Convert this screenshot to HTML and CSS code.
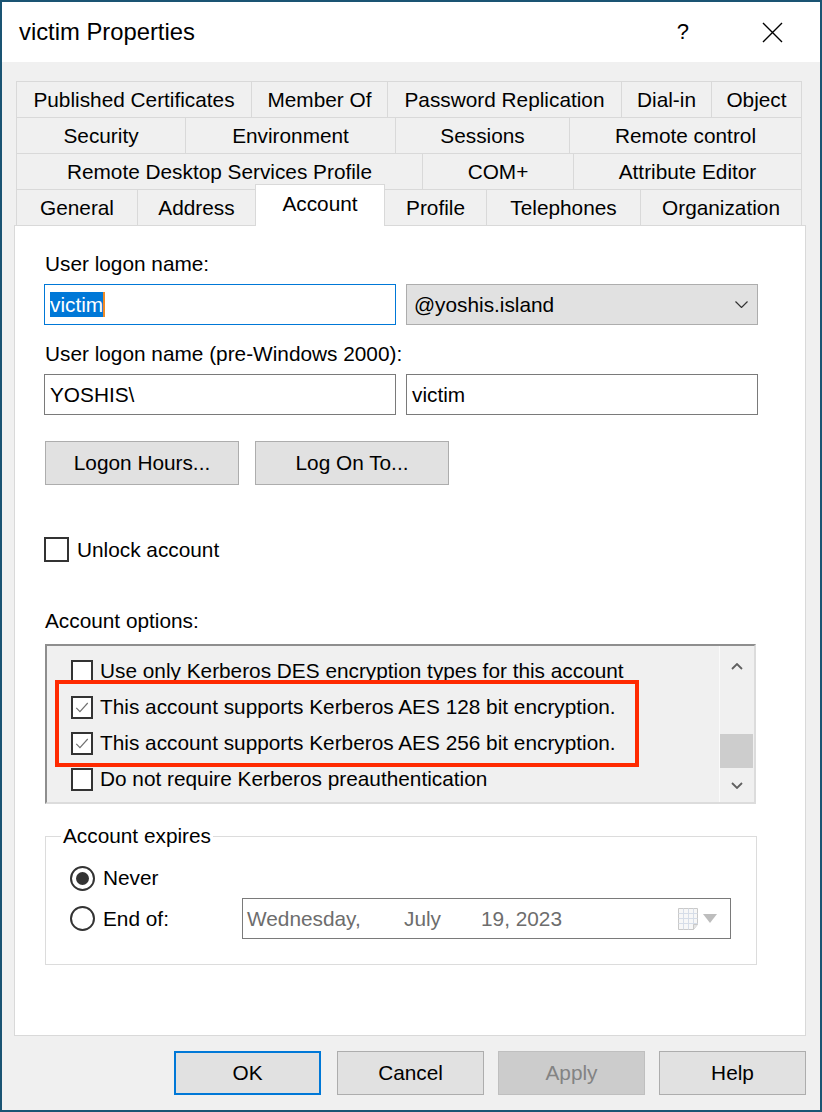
FILE: index.html
```html
<!DOCTYPE html>
<html>
<head>
<meta charset="utf-8">
<title>victim Properties</title>
<link rel="stylesheet" href="styles.css">
</head>
<body>
<div class="window">
  <div class="titlebar">
    <span class="title">victim Properties</span>
    <span class="help">?</span>
    <svg class="close" viewBox="0 0 21 21"><path d="M1 1L20 20M20 1L1 20" stroke="#000" stroke-width="1.4" fill="none"/></svg>
  </div>
  <div class="client">
    <div class="tabs">
      <div class="tabrow r1">
        <div class="tab">Published Certificates</div>
        <div class="tab">Member Of</div>
        <div class="tab">Password Replication</div>
        <div class="tab">Dial-in</div>
        <div class="tab">Object</div>
      </div>
      <div class="tabrow r2">
        <div class="tab">Security</div>
        <div class="tab">Environment</div>
        <div class="tab">Sessions</div>
        <div class="tab">Remote control</div>
      </div>
      <div class="tabrow r3">
        <div class="tab">Remote Desktop Services Profile</div>
        <div class="tab">COM+</div>
        <div class="tab">Attribute Editor</div>
      </div>
      <div class="tabrow r4">
        <div class="tab">General</div>
        <div class="tab">Address</div>
        <div class="tab active">Account</div>
        <div class="tab after-active">Profile</div>
        <div class="tab">Telephones</div>
        <div class="tab">Organization</div>
      </div>
    </div>

    <div class="panel">
      <div class="label first">User logon name:</div>
      <div class="field-row">
        <div class="textbox focused"><span class="sel">victim</span><span class="caret"></span></div>
        <div class="combo"><span>@yoshis.island</span>
          <svg class="chev" viewBox="0 0 13 7"><polyline points="0.5,0.5 6.5,6.5 12.5,0.5" fill="none" stroke="#333" stroke-width="1.2"/></svg>
        </div>
      </div>
      <div class="label second">User logon name (pre-Windows 2000):</div>
      <div class="field-row">
        <div class="textbox">YOSHIS\</div>
        <div class="textbox">victim</div>
      </div>
      <div class="btn-row">
        <div class="btn wide">Logon Hours...</div>
        <div class="btn wide">Log On To...</div>
      </div>
      <div class="check-row unlock">
        <span class="box"></span><span>Unlock account</span>
      </div>
      <div class="label options">Account options:</div>
      <div class="listbox">
        <div class="items">
          <div class="item"><span class="box small"></span><span>Use only Kerberos DES encryption types for this account</span></div>
          <div class="item"><span class="box small"><svg viewBox="0 0 22 22"><polyline points="4,11.5 8.5,16 18,5.5" fill="none" stroke="#707070" stroke-width="1.4"/></svg></span><span>This account supports Kerberos AES 128 bit encryption.</span></div>
          <div class="item"><span class="box small"><svg viewBox="0 0 22 22"><polyline points="4,11.5 8.5,16 18,5.5" fill="none" stroke="#707070" stroke-width="1.4"/></svg></span><span>This account supports Kerberos AES 256 bit encryption.</span></div>
          <div class="item"><span class="box small"></span><span>Do not require Kerberos preauthentication</span></div>
        </div>
        <div class="scrollbar">
          <div class="arrow"><svg viewBox="0 0 12 7"><polyline points="1,6 6,1 11,6" fill="none" stroke="#606060" stroke-width="1.8"/></svg></div>
          <div></div>
          <div class="thumb"></div>
          <div class="arrow"><svg viewBox="0 0 12 7"><polyline points="1,1 6,6 11,1" fill="none" stroke="#606060" stroke-width="1.8"/></svg></div>
        </div>
        <div class="highlight"></div>
      </div>

      <fieldset class="group">
        <legend>Account expires</legend>
        <div class="radio-row never">
          <span class="radio on"></span><span>Never</span>
        </div>
        <div class="radio-row endof">
          <span class="radio"></span><span class="radio-label">End of:</span>
          <div class="datebox">
            <span class="d1">Wednesday,</span><span class="d2">July</span><span class="d3">19, 2023</span>
            <svg class="cal" viewBox="0 0 20 22"><path d="M0.5 0.5H19.5V16.5L15.5 21.5H0.5Z" fill="#f7f7f7" stroke="#c9c9c9"/><path d="M0.5 5.5H19.5M0.5 10.5H19.5M0.5 15.5H19.5M5.5 0.5V21.5M10.5 0.5V21.5M15.5 0.5V21" stroke="#d6dde8" fill="none"/><path d="M15.5 21.5V16.5H19.5" fill="#e4e4e4" stroke="#c9c9c9"/></svg>
            <svg class="tri" viewBox="0 0 14 9"><polygon points="0,0 14,0 7,9" fill="#bdbdbd"/></svg>
          </div>
        </div>
      </fieldset>
    </div>

    <div class="footer">
      <div class="btn dlg default">OK</div>
      <div class="btn dlg">Cancel</div>
      <div class="btn dlg disabled">Apply</div>
      <div class="btn dlg">Help</div>
    </div>
  </div>
</div>
</body>
</html>
```

FILE: styles.css
```css
* { box-sizing: border-box; }
html, body { margin: 0; padding: 0; }
body {
  font-family: "Liberation Sans", Arial, sans-serif;
  font-size: 20.8px;
  color: #000;
  background: #1a5473;
}
.window {
  width: 822px;
  height: 1112px;
  border: 2px solid #1a5473;
  background: #f0f0f0;
  display: flex;
  flex-direction: column;
}
.titlebar {
  height: 60px;
  flex: none;
  background: #fff;
  display: flex;
  align-items: center;
  padding: 0 37px 0 17px;
}
.title { font-size: 23.8px; }
.help { margin-left: auto; margin-right: 73px; font-size: 22px; }
.close { width: 21px; height: 21px; }

.client { flex: 1; padding: 19px 14px 0 12px; }
.tabs { margin: 0 4px 0 2px; }
.tabrow {
  display: grid;
  height: 36px;
  border-right: 1px solid #d9d9d9;
}
.r1 { grid-template-columns: 235px 136px 234px 90px 1fr; }
.r2 { grid-template-columns: 169px 210px 174px 1fr; }
.r3 { grid-template-columns: 406px 151px 1fr; }
.r4 { grid-template-columns: 121px 118px 130px 101px 154px 1fr; }
.tab {
  height: 36px;
  border-top: 1px solid #d9d9d9;
  border-left: 1px solid #d9d9d9;
  display: flex;
  align-items: center;
  justify-content: center;
  white-space: nowrap;
}
.tab.active {
  background: #fff;
  height: 42px;
  margin-top: -5px;
  margin-bottom: -1px;
  padding-bottom: 4px;
  border-right: 1px solid #d9d9d9;
  position: relative;
  z-index: 1;
}
.tab.after-active { border-left: none; }

.panel {
  height: 811px;
  background: #fff;
  border: 1px solid #d9d9d9;
  padding: 0 0 0 30px;
}
.label { line-height: 24px; height: 24px; }
.label.first { margin-top: 26px; }
.label.second { margin-top: 17px; }
.label.options { margin-top: 47px; }

.field-row {
  display: flex;
  gap: 10px;
  margin: 8px 0 0 -1px;
}
.textbox {
  width: 352px;
  height: 41px;
  border: 1px solid #7a7a7a;
  background: #fff;
  display: flex;
  align-items: center;
  padding-left: 5px;
}
.textbox.focused { border-color: #0078d7; }
.sel {
  background: #0078d7;
  color: #fff;
  line-height: 25px;
  height: 25px;
  display: inline-block;
}
.caret { width: 2px; height: 25px; background: #f08a24; display: inline-block; }
.combo {
  width: 352px;
  height: 41px;
  border: 1px solid #adadad;
  background: #e1e1e1;
  display: flex;
  align-items: center;
  justify-content: space-between;
  padding: 0 9px 0 7px;
}
.chev { width: 13px; height: 7px; }

.btn-row { display: flex; gap: 16px; margin-top: 26px; }
.btn {
  height: 44px;
  border: 1px solid #adadad;
  background: #e1e1e1;
  display: flex;
  align-items: center;
  justify-content: center;
}
.btn.wide { width: 194px; }

.check-row { display: flex; align-items: center; gap: 8px; height: 25px; }
.unlock { margin: 52px 0 0 -1px; }
.box {
  width: 25px;
  height: 25px;
  border: 2px solid #333;
  background: #fff;
  flex: none;
  display: block;
}
.box.small { width: 22px; height: 23px; }
.box svg { display: block; width: 18px; height: 19px; }

.listbox {
  position: relative;
  width: 711px;
  height: 160px;
  margin-top: 11px;
  border: 2px solid;
  border-color: #8e8e8e #dcdcdc #dcdcdc #8e8e8e;
  background: #f0f0f0;
  display: flex;
  overflow: hidden;
}
.items { flex: 1; padding: 7px 0 0 24px; }
.item {
  height: 36px;
  display: flex;
  align-items: center;
  gap: 7px;
  white-space: nowrap;
}
.scrollbar {
  width: 35px;
  flex: none;
  border-left: 1px solid #fafafa;
  display: grid;
  grid-template-rows: 40px 48px 34px 34px;
}
.arrow { display: flex; align-items: center; justify-content: center; }
.arrow svg { width: 12px; height: 7px; }
.thumb { background: #cdcdcd; margin: 0 1px 0 0; }
.highlight {
  position: absolute;
  left: 8px;
  top: 34px;
  width: 584px;
  height: 87px;
  border: 4px solid #ff2a00;
}

.group {
  width: 712px;
  height: 141px;
  margin: 20px 0 0 0;
  border: 1px solid #dcdcdc;
  padding: 0 0 0 15px;
}
.group legend { padding: 0 2px; line-height: 24px; }
.radio-row { display: flex; align-items: center; margin-left: 9px; }
.never { height: 36px; margin-top: 12px; }
.endof { height: 41px; margin-top: 2px; }
.radio {
  width: 25px;
  height: 25px;
  border: 2px solid #333;
  border-radius: 50%;
  background: #fff;
  margin-right: 8px;
  flex: none;
  display: flex;
  align-items: center;
  justify-content: center;
}
.radio.on::after {
  content: "";
  width: 13px;
  height: 13px;
  border-radius: 50%;
  background: #333;
}
.radio-label { width: 139px; }
.datebox {
  width: 489px;
  height: 41px;
  border: 1px solid #7a7a7a;
  background: #fff;
  display: flex;
  align-items: center;
  padding-left: 4px;
  color: #6d6d6d;
}
.d1 { width: 157px; }
.d2 { width: 77px; }
.d3 { width: 197px; }
.cal { width: 20px; height: 22px; margin-left: 0; }
.tri { width: 14px; height: 9px; margin-left: 5px; }

.footer {
  display: flex;
  justify-content: flex-end;
  gap: 14px;
  margin-top: 15px;
}
.btn.dlg { width: 147px; }
.btn.default { border: 2px solid #0078d7; margin-right: 2px; }
.btn.disabled { background: #cccccc; border-color: #bfbfbf; color: #838383; }
```
